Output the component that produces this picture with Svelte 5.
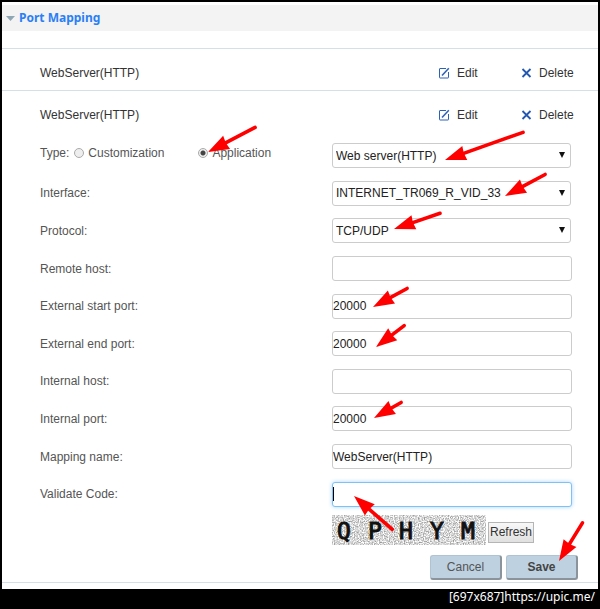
<script lang="ts">
	const rules = ['WebServer(HTTP)', 'WebServer(HTTP)'];

	let type = $state('application');
	let application = $state('Web server(HTTP)');
	let wan = $state('INTERNET_TR069_R_VID_33');
	let protocol = $state('TCP/UDP');

	let fields = $state([
		{ id: 'remote-host', label: 'Remote host:', value: '' },
		{ id: 'ext-start', label: 'External start port:', value: '20000' },
		{ id: 'ext-end', label: 'External end port:', value: '20000' },
		{ id: 'int-host', label: 'Internal host:', value: '' },
		{ id: 'int-port', label: 'Internal port:', value: '20000' },
		{ id: 'map-name', label: 'Mapping name:', value: 'WebServer(HTTP)' }
	]);
	let code = $state('');

	const captcha = ['Q', 'P', 'H', 'Y', 'M'];

	// tail x, tail y, tip x, tip y
	const marks = [
		[256, 127, 208, 152],
		[524, 132, 445, 160],
		[546, 174, 505, 196],
		[441, 213, 394, 229],
		[408, 288, 373, 307],
		[405, 325, 376, 347],
		[402, 402, 374, 418],
		[393, 530, 354, 496],
		[583, 522, 559, 561]
	].map(([x1, y1, x2, y2]) => ({
		x: x2,
		y: y2,
		length: Math.hypot(x1 - x2, y1 - y2),
		angle: (Math.atan2(y1 - y2, x1 - x2) * 180) / Math.PI
	}));
</script>

<div class="page">
	<main class="panel">
		<h1>
			<svg width="9" height="5" viewBox="0 0 9 5"><path d="M0 0h9L4.500 5z" fill="#8fa6b4" /></svg>
			Port Mapping
		</h1>

		<ul class="rules">
			{#each rules as rule}
				<li>
					<span>{rule}</span>
					<button type="button" class="action">
						<svg width="12" height="12" viewBox="0 0 12 12" fill="none" stroke="#2a62b8">
							<path d="M8 1.500H2Q1.500 1.500 1.500 2v8.500q0 .5.5.5h8q.5 0 .5-.5V5" />
							<path d="M4 8.500 10.800 1.200" stroke-width="1.500" />
						</svg>
						Edit
					</button>
					<button type="button" class="action">
						<svg width="11" height="12" viewBox="0 0 11 12" fill="none" stroke="#2258b0" stroke-width="1.800">
							<path d="M1.500 2 9.500 10M9.500 2 1.500 10" />
						</svg>
						Delete
					</button>
				</li>
			{/each}
		</ul>

		<form onsubmit={(e) => e.preventDefault()}>
			<div class="row">
				<div class="types">
					<span>Type:</span>
					<label class="first"><input type="radio" name="type" value="customization" bind:group={type} />Customization</label>
					<label><input type="radio" name="type" value="application" bind:group={type} />Application</label>
				</div>
				<div class="select">
					<select aria-label="Application" bind:value={application}>
						<option>Web server(HTTP)</option>
					</select>
				</div>
			</div>
			<div class="row">
				<label for="wan">Interface:</label>
				<div class="select">
					<select id="wan" bind:value={wan}>
						<option>INTERNET_TR069_R_VID_33</option>
					</select>
				</div>
			</div>
			<div class="row">
				<label for="protocol">Protocol:</label>
				<div class="select">
					<select id="protocol" bind:value={protocol}>
						<option>TCP/UDP</option>
						<option>TCP</option>
						<option>UDP</option>
					</select>
				</div>
			</div>
			{#each fields as field (field.id)}
				<div class="row">
					<label for={field.id}>{field.label}</label>
					<input class="text" id={field.id} type="text" bind:value={field.value} />
				</div>
			{/each}
			<div class="row">
				<label for="code">Validate Code:</label>
				<div class="validate">
					<input class="text" id="code" type="text" autocomplete="off" bind:value={code} />
				</div>
			</div>

			<div class="captcha">
				<svg width="154" height="30" viewBox="0 0 154 30">
					<filter id="noise" x="0" y="0" width="100%" height="100%" color-interpolation-filters="sRGB">
						<feTurbulence type="fractalNoise" baseFrequency="0.8" numOctaves="1" seed="4" />
						<feColorMatrix values="1 0 0 0 .34  1 0 0 0 .34  1 0 0 0 .34  0 0 0 0 1" />
					</filter>
					<rect width="154" height="30" filter="url(#noise)" />
					{#each captcha as letter, i}
						<text x={12 + i * 31} y="24" text-anchor="middle">{letter}</text>
					{/each}
				</svg>
				<button type="button" class="refresh">Refresh</button>
			</div>

			<div class="buttons">
				<button type="button">Cancel</button>
				<button type="submit" class="save">Save</button>
			</div>
		</form>
	</main>

	<footer>[697x687]<a href="https://upic.me/">https://upic.me/</a></footer>

	<svg class="marks" width="600" height="609" viewBox="0 0 600 609" aria-hidden="true">
		{#each marks as mark}
			<g transform="translate({mark.x} {mark.y}) rotate({mark.angle})">
				<path d="M16 0H{mark.length - 1}" stroke="#f00" stroke-width="3.600" stroke-linecap="round" />
				<path d="M0 0 21-7.500 20 0 21 7.500z" fill="#f00" />
			</g>
		{/each}
	</svg>
</div>

<style>
	:global(body) {
		margin: 0;
		background: #000;
	}

	.page {
		position: relative;
		display: flex;
		flex-direction: column;
		min-height: 100vh;
		padding: 2px 2px 0;
		box-sizing: border-box;
		background: #000;
		font-family: 'Liberation Sans', Arial, sans-serif;
		font-size: 12px;
		line-height: 16px;
		color: #333;
	}

	.panel {
		flex: 1;
		display: flex;
		flex-direction: column;
		padding: 3px 0 6px;
		background: #fff;
	}

	h1 {
		display: flex;
		align-items: center;
		gap: 4px;
		height: 26px;
		margin: 0 0 17px;
		padding-left: 4px;
		background: #f3f3f3;
		color: #2a7ff5;
		font-family: 'Noto Sans', sans-serif;
		font-size: 12px;
		font-weight: bold;
	}

	.rules {
		margin: 0;
		padding: 0;
		list-style: none;
	}

	.rules li {
		display: grid;
		grid-template-columns: 1fr 83px 53px;
		padding: 16px 24px 9px 38px;
		border-top: 1px solid #d5dfe8;
	}

	button,
	input,
	select {
		font: inherit;
		color: inherit;
	}

	.action {
		display: flex;
		align-items: center;
		gap: 7px;
		padding: 0;
		border: none;
		background: none;
		cursor: pointer;
	}

	form {
		flex: 1;
		display: flex;
		flex-direction: column;
		padding: 5px 26px 2px 38px;
		border-bottom: 1px solid #d5dfe8;
	}

	.row {
		flex: 1;
		display: grid;
		grid-template-columns: 1fr 240px;
		align-items: center;
		color: #555;
	}

	.types {
		display: flex;
		gap: 5px;
		padding-bottom: 6px;
	}

	.types label {
		display: flex;
		align-items: center;
		gap: 4px;
	}

	.types .first {
		margin-right: 29px;
	}

	.types input {
		appearance: none;
		width: 10px;
		height: 10px;
		margin: 0;
		border: 1px solid #aaa;
		border-radius: 50%;
		background: #eee;
	}

	.types input:checked {
		background: radial-gradient(circle, #444 0 2px, #eee 3px);
	}

	.select {
		position: relative;
		margin-right: 1px;
	}

	.select::after {
		content: '';
		position: absolute;
		top: 9px;
		right: 6px;
		border: 3px solid transparent;
		border-top: 6px solid #111;
		border-bottom: none;
		pointer-events: none;
	}

	select,
	.text {
		display: block;
		width: 100%;
		height: 25px;
		box-sizing: border-box;
		border: 1px solid #ccc;
		border-radius: 3px;
		background: #fff;
		color: #222;
		outline: none;
	}

	select {
		appearance: none;
		padding: 0 3px;
	}

	.text {
		padding: 0;
	}

	.validate {
		position: relative;
	}

	.validate .text {
		border-color: #7fc0f5;
		box-shadow: 0 0 4px #a9d6fa;
		caret-color: transparent;
	}

	.validate::after {
		content: '';
		position: absolute;
		top: 5px;
		left: 1px;
		width: 1px;
		height: 14px;
		background: #000;
	}

	.captcha {
		display: flex;
		align-items: flex-end;
		justify-content: flex-start;
		gap: 2px;
		width: 240px;
		margin: 2px 0 10px auto;
	}

	.captcha text {
		font-family: 'DejaVu Sans Mono', monospace;
		font-size: 23px;
		fill: #111;
		stroke: #111;
		stroke-width: 1px;
	}

	.refresh {
		height: 21px;
		margin-bottom: 2px;
		padding: 0 1px;
		border: 1px solid #b5b5b5;
		background: linear-gradient(#f8f8f8, #e0e0e0);
	}

	.buttons {
		display: flex;
		justify-content: flex-end;
		gap: 4px;
		margin-right: -6px;
	}

	.buttons button {
		width: 72px;
		height: 25px;
		padding: 0;
		border: 1px solid #b0c3d1;
		border-right: 2px solid #8b949b;
		border-bottom: 2px solid #8b949b;
		border-radius: 3px;
		background: #bdd1e0;
		color: #555;
	}

	.buttons .save {
		color: #444;
		font-weight: bold;
	}

	footer {
		padding: 0 3px 4px;
		background: #000;
		color: #fff;
		font-family: 'Noto Sans', sans-serif;
		text-align: right;
	}

	footer a {
		color: inherit;
		text-decoration: none;
	}

	.marks {
		position: absolute;
		top: 0;
		left: 0;
		pointer-events: none;
	}
</style>
